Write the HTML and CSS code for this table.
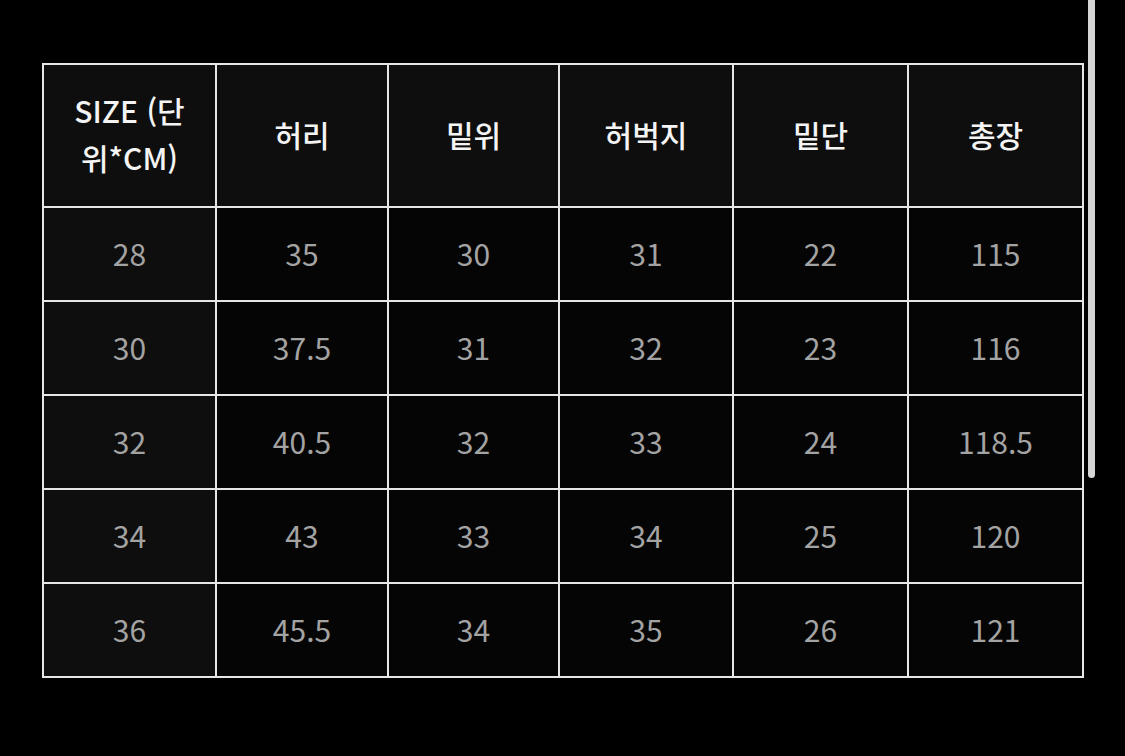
FILE: index.html
```html
<!DOCTYPE html>
<html lang="ko">
<head>
<meta charset="utf-8">
<link rel="stylesheet" href="styles.css">
</head>
<body>
<div class="page">
  <table class="size-table">
    <colgroup>
      <col class="c1"><col class="c2"><col class="c3"><col class="c4"><col class="c5"><col class="c6">
    </colgroup>
    <thead>
      <tr>
        <th class="first-head">SIZE (단 위*CM)</th>
        <th>허리</th>
        <th>밑위</th>
        <th>허벅지</th>
        <th>밑단</th>
        <th>총장</th>
      </tr>
    </thead>
    <tbody>
      <tr><td class="size">28</td><td>35</td><td>30</td><td>31</td><td>22</td><td>115</td></tr>
      <tr><td class="size">30</td><td>37.5</td><td>31</td><td>32</td><td>23</td><td>116</td></tr>
      <tr><td class="size">32</td><td>40.5</td><td>32</td><td>33</td><td>24</td><td>118.5</td></tr>
      <tr><td class="size">34</td><td>43</td><td>33</td><td>34</td><td>25</td><td>120</td></tr>
      <tr><td class="size">36</td><td>45.5</td><td>34</td><td>35</td><td>26</td><td>121</td></tr>
    </tbody>
  </table>
  <div class="scroll-thumb"></div>
</div>
</body>
</html>
```

FILE: styles.css
```css
html, body {
  margin: 0;
  padding: 0;
  background: #000;
  height: 100%;
  overflow: hidden;
}
.page {
  position: relative;
  width: 1125px;
  height: 756px;
  padding: 63px 0 0 42px;
  box-sizing: border-box;
  font-family: "Noto Sans CJK KR", "Noto Sans", sans-serif;
}
.size-table {
  border-collapse: collapse;
  table-layout: fixed;
  width: 1040px;
}
.c1 { width: 173px; }
.c2 { width: 172px; }
.c3 { width: 171px; }
.c4 { width: 174px; }
.c5 { width: 175px; }
.c6 { width: 175px; }
.size-table th,
.size-table td {
  border: 2px solid #e6e6e6;
  text-align: center;
  vertical-align: middle;
  padding: 0 12px 3px;
  font-size: 30px;
}
.size-table th {
  height: 138px;
  background: #0e0e0e;
  color: #f4f4f4;
  font-weight: 500;
  line-height: 47px;
}
.size-table th.first-head {
  padding: 0 24px 3px;
}
.size-table td {
  height: 89px;
  background: #050505;
  color: #a3a3a3;
  font-weight: 400;
}
.size-table td.size {
  background: #0e0e0e;
}
.scroll-thumb {
  position: absolute;
  top: 0;
  left: 1088px;
  width: 7px;
  height: 478px;
  background: #d6d6d6;
  border-radius: 0 0 4px 4px;
}
```
